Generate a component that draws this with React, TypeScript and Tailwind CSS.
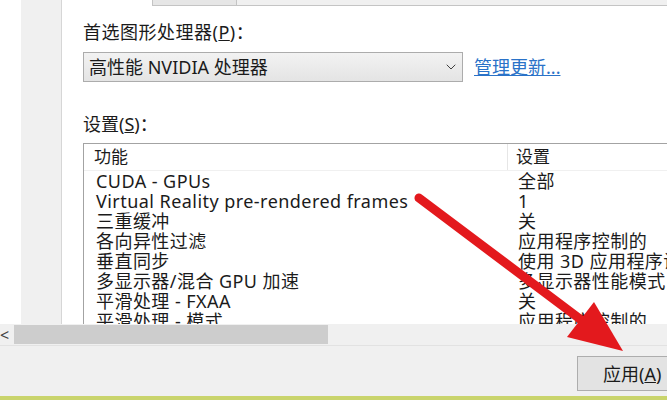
import { ChevronDown } from "lucide-react";

const rows: [string, string][] = [
  ["CUDA - GPUs", "全部"],
  ["Virtual Reality pre-rendered frames", "1"],
  ["三重缓冲", "关"],
  ["各向异性过滤", "应用程序控制的"],
  ["垂直同步", "使用 3D 应用程序设置"],
  ["多显示器/混合 GPU 加速", "多显示器性能模式"],
  ["平滑处理 - FXAA", "关"],
  ["平滑处理 - 模式", "应用程序控制的"],
];

function RedArrow() {
  // annotation drawn over the screenshot
  return (
    <svg
      className="pointer-events-none absolute left-0 top-0"
      width={667}
      height={400}
      viewBox="0 0 667 400"
    >
      <line
        x1={419}
        y1={198}
        x2={584}
        y2={322}
        stroke="#e3191d"
        strokeWidth={9}
        strokeLinecap="round"
      />
      <polygon points="623,351 567,337 594,302" fill="#e3191d" />
    </svg>
  );
}

export default function App() {
  return (
    <div className="relative h-[400px] w-[667px] overflow-hidden bg-white font-['Noto_Sans','Noto_Sans_CJK_SC',sans-serif] text-[18px] leading-[20px] text-[#1b1b1b]">
      <div className="flex h-[324px]">
        <div className="w-[21px] shrink-0 bg-white" />
        <div className="w-[41px] shrink-0 border-r border-[#d6d6d6] bg-[#f0f0f0]" />
        <div className="min-w-0 flex-1 overflow-hidden">
          <div className="ml-[90px] flex h-[6px] border-b border-[#c4c4c4] bg-[#f0f0f0]">
            <div className="w-[85px] border-x border-[#c4c4c4] bg-[#e6e6e6]" />
          </div>

          <div className="pl-[21px]">
            <div className="mt-[16px] tracking-[0.5px]">
              首选图形处理器(<span className="underline">P</span>)：
            </div>

            <div className="mt-[10px] flex items-center gap-[11px]">
              <div className="flex h-[30px] w-[380px] items-center justify-between border border-[#acacac] bg-gradient-to-b from-[#f2f2f2] to-[#e4e4e4] pl-[5px] pr-[3px]">
                <span>高性能 NVIDIA 处理器</span>
                <ChevronDown size={16} strokeWidth={1.5} className="text-[#404040]" />
              </div>
              <span className="whitespace-nowrap text-[#2a72c8] underline">管理更新...</span>
            </div>

            <div className="mt-[32px]">
              设置(<span className="underline">S</span>)：
            </div>

            <div className="mt-[9px] w-[640px] border border-[#a3a3a3] bg-white">
              <div className="flex h-[27px] items-center border-b border-[#f0f0f0] text-[17px]">
                <div className="flex h-full w-[424px] items-center border-r border-[#e6e6e6] pl-[10px]">
                  功能
                </div>
                <div className="pl-[8px]">设置</div>
              </div>
              {rows.map(([name, value]) => (
                <div key={name} className="flex h-[20px] items-center whitespace-nowrap tracking-[0.45px]">
                  <div className="w-[424px] pl-[12px]">{name}</div>
                  <div className="pl-[10px]">{value}</div>
                </div>
              ))}
            </div>
          </div>
        </div>
      </div>

      <div className="flex h-[21px] items-center bg-[#f0f0f0]">
        <span className="w-[14px] text-[16px] leading-none text-[#444]">&lt;</span>
        <div className="h-[19px] w-[314px] bg-[#cdcdcd]" />
      </div>

      <div className="h-[51px] border-t border-[#e2e2e2] bg-[#f0f0f0] pl-[577px] pt-[10px]">
        <div className="flex h-[35px] w-[100px] items-center border border-[#adadad] bg-[#e3e3e3] pl-[25px]">
          应用(<span className="underline">A</span>)
        </div>
      </div>

      <div className="h-[4px] bg-[#c9d46c]" />

      <RedArrow />
    </div>
  );
}
